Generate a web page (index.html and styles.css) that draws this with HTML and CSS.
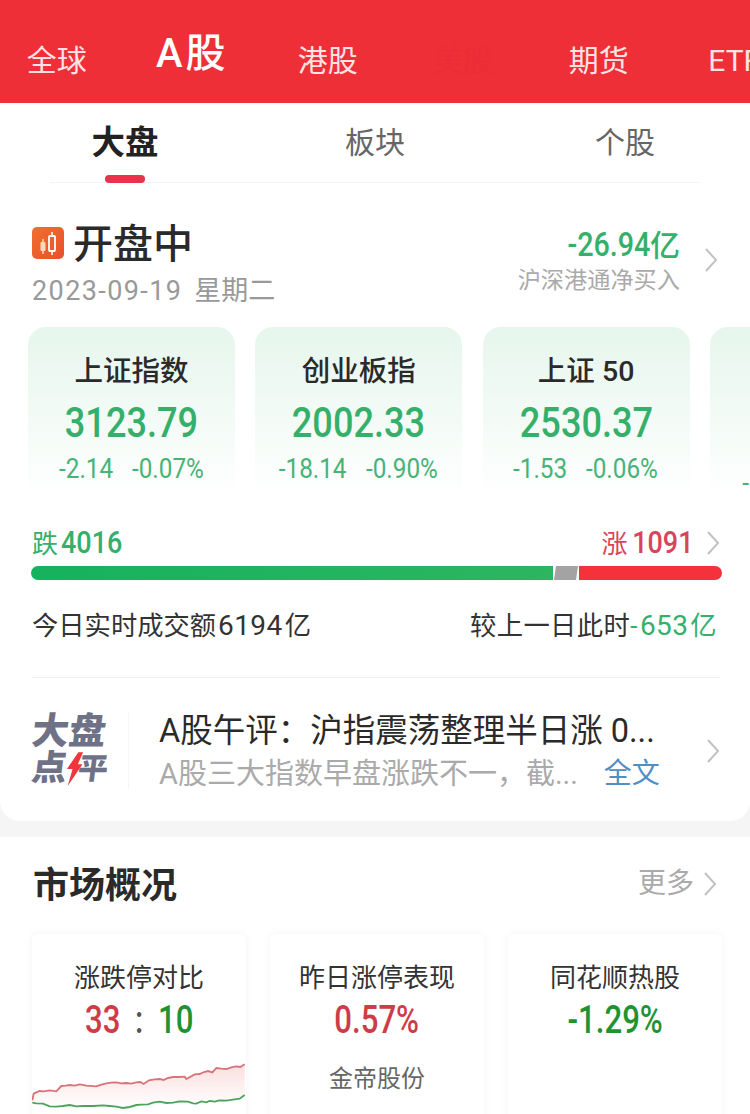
FILE: index.html
```html
<!DOCTYPE html>
<html lang="zh-CN">
<head>
  <meta charset="utf-8" />
  <title>行情</title>
  <link rel="stylesheet" href="styles.css">
</head>
<body>

<svg class="defs" width="0" height="0">
  <symbol id="chev" viewBox="0 0 14 26">
    <polyline points="2,2 12,13 2,24" fill="none" stroke="currentColor" stroke-width="2" />
  </symbol>
</svg>

<div class="topnav">
  <a class="nav-item">全球</a>
  <a class="nav-item on">A股</a>
  <a class="nav-item">港股</a>
  <a class="nav-item faint">美股</a>
  <a class="nav-item">期货</a>
  <a class="nav-item">ETF</a>
</div>

<div class="panel">
  <div class="subtabs">
    <a class="subtab on">大盘</a>
    <a class="subtab">板块</a>
    <a class="subtab">个股</a>
  </div>

  <div class="status">
    <div class="status-left">
      <div class="status-title">
        <svg class="status-icon" width="32" height="32" viewBox="0 0 32 32">
          <defs>
            <linearGradient id="org" x1="0" y1="0" x2="1" y2="1">
              <stop offset="0" stop-color="#f0702e" />
              <stop offset="1" stop-color="#e8502a" />
            </linearGradient>
          </defs>
          <rect width="32" height="32" rx="5" fill="url(#org)" />
          <path d="M11 12v3M11 24v3" stroke="#ffd9b8" stroke-width="1.5" />
          <rect x="8.5" y="15" width="5" height="9" rx="1" fill="#ffd9b8" />
          <path d="M20 5v4M20 24v4" stroke="#fff" stroke-width="1.5" />
          <rect x="17" y="9" width="6" height="15" rx="1" fill="none" stroke="#fff" stroke-width="1.8" />
        </svg>
        <span>开盘中</span>
      </div>
      <div class="status-date">2023-09-19<span class="week">星期二</span></div>
    </div>
    <div class="flow">
      <div class="flow-num"><span class="squeeze">-26.94</span>亿</div>
      <div class="flow-label">沪深港通净买入</div>
    </div>
    <svg class="chev status-chev"><use href="#chev" /></svg>
  </div>

  <div class="indexes">
    <div class="index-card">
      <div class="index-name">上证指数</div>
      <div class="index-val"><span class="squeeze">3123.79</span></div>
      <div class="index-chg"><span>-2.14</span><span>-0.07%</span></div>
    </div>
    <div class="index-card">
      <div class="index-name">创业板指</div>
      <div class="index-val"><span class="squeeze">2002.33</span></div>
      <div class="index-chg"><span>-18.14</span><span>-0.90%</span></div>
    </div>
    <div class="index-card">
      <div class="index-name">上证 50</div>
      <div class="index-val"><span class="squeeze">2530.37</span></div>
      <div class="index-chg"><span>-1.53</span><span>-0.06%</span></div>
    </div>
    <div class="index-card">
      <div class="index-chg clip-chg"><span>-</span></div>
    </div>
  </div>

  <div class="updown">
    <div class="down"><span class="cn">跌</span><span class="squeeze">4016</span></div>
    <div class="up"><span class="cn">涨</span><span class="squeeze">1091</span></div>
    <svg class="chev"><use href="#chev" /></svg>
  </div>
  <div class="bar">
    <div class="bar-down"></div>
    <div class="bar-flat"></div>
    <div class="bar-up"></div>
  </div>

  <div class="turnover">
    <div>今日实时成交额<span class="tnum">6194</span>亿</div>
    <div class="turnover-right">较上一日此时<span class="green">-<span class="tnum">653</span>亿</span></div>
  </div>

  <div class="news">
    <div class="news-logo">
      <div class="logo-row logo-top">大盘</div>
      <div class="logo-row">点<svg class="bolt" width="15" height="34" viewBox="0 0 16 36"><polygon points="10,0 15,0 11,13 16,13 3,36 6,18 0,18" fill="#f0353c" /></svg><span class="logo-ping">平</span></div>
    </div>
    <div class="news-body">
      <div class="news-title">A股午评：沪指震荡整理半日涨 0...</div>
      <div class="news-sub">
        <span class="news-desc">A股三大指数早盘涨跌不一，截...</span>
        <span class="news-more">全文</span>
      </div>
    </div>
    <svg class="chev"><use href="#chev" /></svg>
  </div>
</div>

<div class="market">
  <div class="market-head">
    <h2>市场概况</h2>
    <div class="more">更多<svg class="chev"><use href="#chev" /></svg></div>
  </div>
  <div class="market-cards">
    <div class="m-card">
      <div class="m-title">涨跌停对比</div>
      <div class="m-val"><span class="squeeze"><span class="red">33</span><span class="colon">:</span><span class="dgreen">10</span></span></div>
      <svg class="spark" width="214" height="64" viewBox="38 0 640 192">
        <defs>
          <linearGradient id="pink" x1="0" y1="0" x2="0" y2="1">
            <stop offset="0" stop-color="#fbdfdf" />
            <stop offset="1" stop-color="#fff" />
          </linearGradient>
        </defs>
        <path d="M38 148L42 128L50 124L60 120L72 121L90 118L110 121L125 105L138 104L150 102L165 104L180 100L200 104L230 106L245 101L260 97L275 95L290 94L305 97L320 96L335 98L350 94L362 93L372 99L388 88L405 85L420 84L432 87L445 81L460 78L478 78L495 77L500 84L525 70L540 69L553 63L565 60L578 64L590 51L605 53L620 54L635 49L650 46L662 48L675 40L675 132L660 143L640 146L620 149L600 148L585 152L570 150L560 154L545 151L530 158L520 157L505 152L480 151L460 155L440 156L420 152L400 155L385 160L365 161L350 162L330 168L310 171L290 167L270 165L250 163L220 165L190 165L170 166L150 162L130 165L110 167L90 166L70 158L50 157L38 155Z" fill="url(#pink)" />
        <polyline class="line-up" points="38,148 42,128 50,124 60,120 72,121 90,118 110,121 125,105 138,104 150,102 165,104 180,100 200,104 230,106 245,101 260,97 275,95 290,94 305,97 320,96 335,98 350,94 362,93 372,99 388,88 405,85 420,84 432,87 445,81 460,78 478,78 495,77 500,84 525,70 540,69 553,63 565,60 578,64 590,51 605,53 620,54 635,49 650,46 662,48 675,40" />
        <polyline class="line-down" points="38,155 50,157 70,158 90,166 110,167 130,165 150,162 170,166 190,165 220,165 250,163 270,165 290,167 310,171 330,168 350,162 365,161 385,160 400,155 420,152 440,156 460,155 480,151 505,152 520,157 530,158 545,151 560,154 570,150 585,152 600,148 620,149 640,146 660,143 675,132" />
      </svg>
    </div>
    <div class="m-card">
      <div class="m-title">昨日涨停表现</div>
      <div class="m-val red"><span class="squeeze">0.57%</span></div>
      <div class="m-stock">金帝股份</div>
    </div>
    <div class="m-card">
      <div class="m-title">同花顺热股</div>
      <div class="m-val dgreen"><span class="squeeze">-1.29%</span></div>
    </div>
  </div>
</div>

</body>
</html>
```

FILE: styles.css
```css
html, body {
  margin: 0;
  padding: 0;
}
body {
  width: 750px;
  height: 1114px;
  overflow: hidden;
  background: #f5f5f5;
  color: #222;
  font-family: Roboto, "Noto Sans CJK SC", sans-serif;
}
.defs {
  position: absolute;
}
.chev {
  display: block;
  flex: none;
  width: 14px;
  height: 26px;
  color: #c2c2c2;
}
.green {
  color: #35b06a;
}
.red {
  color: #cc3d47;
}
.dgreen {
  color: #1f9331;
}
/* the app's number font is narrower than Roboto */
.squeeze {
  display: inline-block;
  transform: scaleX(0.87);
}

/* top nav */
.topnav {
  display: flex;
  align-items: center;
  height: 103px;
  margin-left: -11px;
  background: #ef2f38;
  overflow: hidden;
}
.nav-item {
  flex: none;
  width: 135.5px;
  padding-top: 18px;
  text-align: center;
  color: #fde3e3;
  font-size: 30px;
  line-height: 40px;
  white-space: nowrap;
}
.nav-item.on {
  padding-top: 4px;
  color: #fff;
  font-size: 40px;
  font-weight: 500;
  line-height: 48px;
  letter-spacing: 3px;
}
.nav-item.faint {
  color: #ea2d36;
}

/* main panel */
.panel {
  height: 718px;
  background: #fff;
  border-radius: 0 0 20px 20px;
  overflow: hidden;
}
.subtabs {
  position: relative;
  display: grid;
  grid-template-columns: repeat(3, 1fr);
  height: 80px;
}
.subtabs::after {
  content: "";
  position: absolute;
  left: 50px;
  right: 50px;
  bottom: 0;
  height: 1px;
  background: #f4f4f4;
}
.subtab {
  position: relative;
  text-align: center;
  color: #666;
  font-size: 30px;
  line-height: 80px;
}
.subtab.on {
  color: #222;
  font-size: 33.5px;
  font-weight: 700;
}
.subtab.on::after {
  content: "";
  position: absolute;
  z-index: 1;
  left: 50%;
  bottom: 0;
  width: 40px;
  height: 8px;
  margin-left: -20px;
  border-radius: 4px;
  background: #e8334a;
}

.status {
  display: flex;
  align-items: flex-start;
  padding: 39px 32px 0 32px;
  height: 105px;
}
.status-left {
  flex: 1;
}
.status-title {
  display: flex;
  align-items: center;
  gap: 9px;
  font-size: 40px;
  font-weight: 500;
  line-height: 46px;
  color: #2a2a2a;
}
.status-icon {
  display: block;
  margin-top: -4px;
}
.status-date {
  margin-top: 4px;
  color: #999;
  font-size: 27px;
  line-height: 38px;
  letter-spacing: 1.4px;
}
.week {
  margin-left: 12px;
  letter-spacing: 0;
}
.flow {
  text-align: right;
  padding-top: 4px;
}
.flow-num {
  color: #35b06a;
  font-size: 30px;
  font-weight: 500;
  line-height: 38px;
}
.flow-num .squeeze {
  font-size: 33px;
  transform-origin: right center;
}
.flow-label {
  color: #aaa;
  font-size: 23.2px;
  line-height: 30px;
}
.status-chev {
  margin: 25px 0 0 24px;
}

/* index cards */
.indexes {
  display: flex;
  gap: 20.3px;
  padding-left: 28px;
  overflow: hidden;
}
.index-card {
  flex: none;
  width: 207px;
  height: 173px;
  padding-top: 23px;
  box-sizing: border-box;
  border-radius: 18px 18px 0 0;
  background: linear-gradient(#e6f6ed, #fff);
  text-align: center;
}
.index-name {
  color: #2a2a2a;
  font-size: 28.5px;
  font-weight: 500;
  line-height: 44px;
}
.index-val {
  margin-top: 6px;
  color: #35b06a;
  font-size: 42px;
  font-weight: 500;
  line-height: 46px;
}
.index-val .squeeze {
  transform: scaleX(0.86);
}
.index-chg {
  display: flex;
  justify-content: center;
  gap: 12px;
  margin-top: 7px;
  color: #47b377;
  font-size: 27px;
  line-height: 32px;
}
.index-chg span {
  transform: scaleX(0.9);
}
.clip-chg {
  justify-content: flex-start;
  margin-top: 117px;
  padding-left: 32px;
}

/* up / down */
.updown {
  display: flex;
  align-items: center;
  height: 38px;
  margin-top: 24px;
  padding: 0 30px 0 32px;
  font-size: 31px;
  font-weight: 500;
  line-height: 38px;
}
.down {
  flex: 1;
  color: #35b06a;
}
.down .squeeze {
  transform-origin: left center;
}
.up {
  color: #d8455a;
  margin-right: 13px;
}
.up .squeeze {
  margin-left: -8px;
  transform-origin: right center;
}
.cn {
  font-size: 26px;
  font-weight: 400;
  margin-right: 3px;
}
.bar {
  display: flex;
  height: 14px;
  margin: 4px 28px 0 31px;
  border-radius: 7px;
  overflow: hidden;
}
.bar-down {
  width: 522px;
  background: linear-gradient(90deg, #16b25e, #2db560);
}
.bar-flat {
  width: 22px;
  margin: 0 1px 0 2px;
  background: #a3a3a3;
  transform: skewX(-8deg);
}
.bar-up {
  flex: 1;
  margin-left: 1px;
  background: #f5323c;
}

.turnover {
  display: flex;
  justify-content: space-between;
  padding: 0 33px 0 32px;
  margin-top: 27px;
  color: #333;
  font-size: 26.3px;
  line-height: 38px;
}
.turnover-right {
  letter-spacing: 0.4px;
}
.tnum {
  margin: 0 2px;
  font-size: 28px;
  letter-spacing: 0.4px;
}

/* news */
.news {
  display: flex;
  align-items: center;
  height: 143px;
  padding-top: 4px;
  margin: 32px 30px 0 32px;
  border-top: 1px solid #eee;
  box-sizing: border-box;
}
.news-logo {
  flex: none;
  width: 96px;
  height: 76px;
  margin-right: 30px;
  border-right: 1px solid #f6f6f6;
  color: #6f7287;
  font-size: 35px;
  font-weight: 900;
  line-height: 37px;
}
.logo-row {
  display: flex;
  align-items: center;
  transform: skewX(-7deg);
  white-space: nowrap;
}
.logo-top {
  font-size: 37px;
}
.bolt {
  margin-left: 0;
}
.logo-ping {
  margin-left: -4px;
  font-size: 30px;
}
.news-body {
  flex: 1;
  min-width: 0;
}
.news-title {
  color: #2a2a2a;
  font-size: 32.5px;
  line-height: 44px;
  white-space: nowrap;
}
.news-sub {
  display: flex;
  gap: 26px;
  margin-top: 2px;
  font-size: 29px;
  line-height: 38px;
}
.news-desc {
  color: #aaa;
}
.news-more {
  color: #4f8fc6;
  font-size: 28px;
}

/* market */
.market {
  height: 277px;
  margin-top: 16px;
  background: #fff;
}
.market-head {
  display: flex;
  justify-content: space-between;
  align-items: center;
  padding: 24px 33px 0 33px;
}
.market-head h2 {
  margin: 0;
  color: #2a2a2a;
  font-size: 36px;
  font-weight: 700;
  line-height: 50px;
}
.more {
  display: flex;
  align-items: center;
  gap: 9px;
  margin-bottom: 5px;
  color: #aaa;
  font-size: 28px;
  line-height: 40px;
}
.market-cards {
  display: flex;
  gap: 24px;
  padding-left: 32px;
  margin-top: 23px;
}
.m-card {
  position: relative;
  flex: none;
  width: 214px;
  height: 200px;
  padding-top: 24px;
  box-sizing: border-box;
  background: #fff;
  border-radius: 6px;
  box-shadow: 0 0 8px rgba(0, 0, 0, 0.05);
  text-align: center;
  overflow: hidden;
}
.m-title {
  color: #333;
  font-size: 26px;
  line-height: 40px;
}
.m-val {
  font-size: 38px;
  font-weight: 500;
  line-height: 44px;
}
.m-val .squeeze {
  transform: scaleX(0.82);
}
.colon {
  margin: 0 18px;
  color: #555;
}
.m-stock {
  margin-top: 19px;
  color: #666;
  font-size: 24px;
  line-height: 36px;
}
.spark {
  display: block;
  position: absolute;
  left: 0;
  top: 117px;
}
.line-up,
.line-down {
  fill: none;
  stroke-width: 5.5;
}
.line-up {
  stroke: #d9737a;
}
.line-down {
  stroke: #4da35b;
}
```
